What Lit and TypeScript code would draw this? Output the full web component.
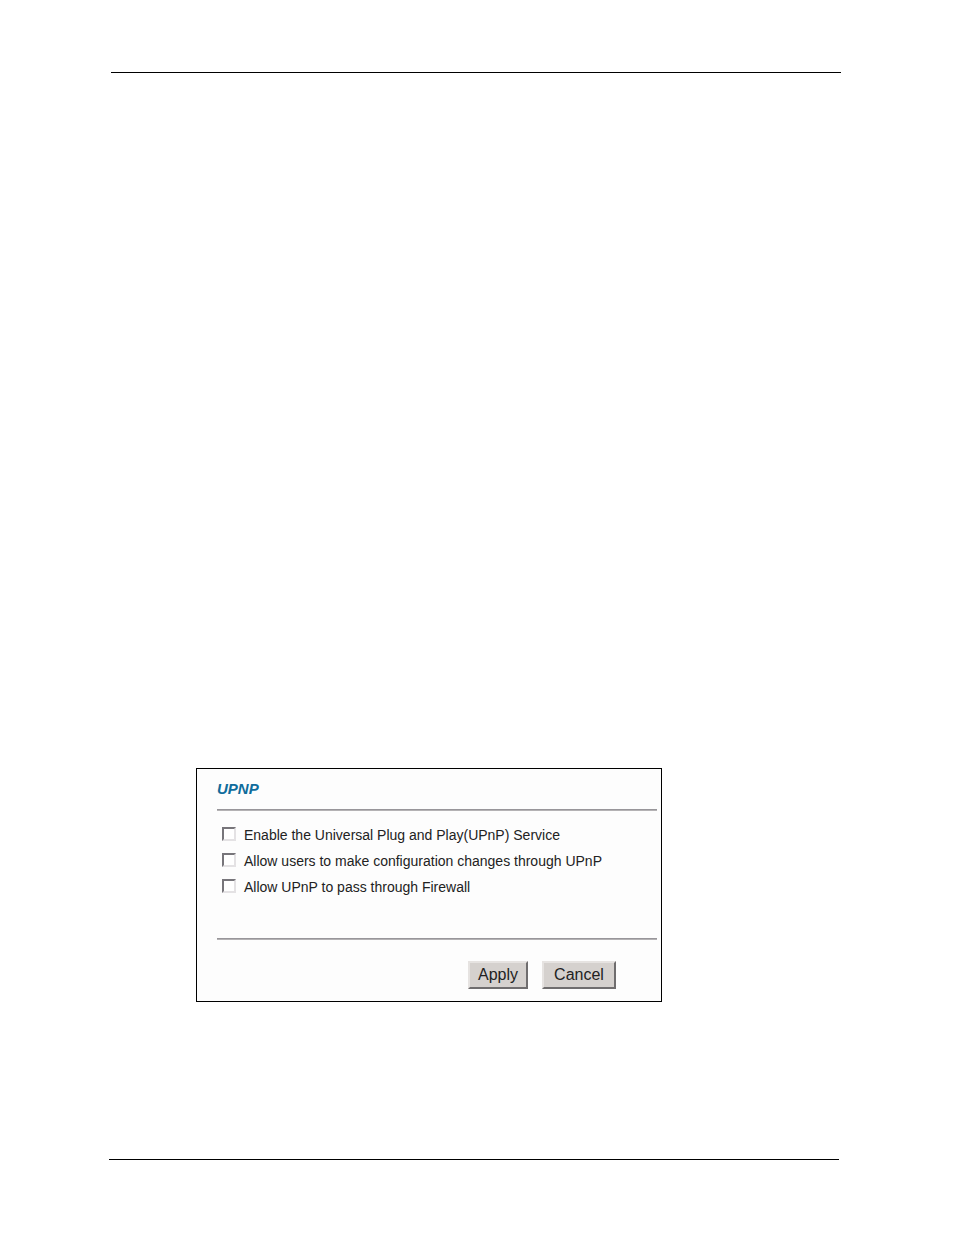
import { LitElement, html, css } from "lit";
import { customElement, state } from "lit/decorators.js";

interface Option {
  id: string;
  label: string;
  checked: boolean;
}

const defaults = (): Option[] => [
  { id: "enable", label: "Enable the Universal Plug and Play(UPnP) Service", checked: false },
  { id: "configure", label: "Allow users to make configuration changes through UPnP", checked: false },
  { id: "firewall", label: "Allow UPnP to pass through Firewall", checked: false },
];

@customElement("upnp-panel")
export class UpnpPanel extends LitElement {
  @state() private options = defaults();

  static styles = css`
    :host {
      display: block;
      box-sizing: border-box;
      border: 1px solid #000;
      background: #fdfdfd;
      color: #222;
      padding: 12px 4px 12px 20px;
      font-family: "Liberation Sans", Arial, sans-serif;
    }
    .title {
      margin: 0;
      font-size: 15px;
      line-height: 16px;
      font-weight: bold;
      font-style: italic;
      color: #0f6c9c;
    }
    .rule {
      margin: 12px 0 11px;
      border: 0;
      border-top: 1px solid #98969a;
      border-bottom: 1px solid #b4b2b4;
    }
    .options {
      display: flex;
      flex-direction: column;
      padding: 0 5px 26px;
    }
    .option {
      display: flex;
      align-items: center;
      gap: 8px;
      min-height: 26px;
    }
    .box {
      appearance: none;
      flex: none;
      box-sizing: border-box;
      width: 14px;
      height: 14px;
      margin: 0 0 2px;
      background: #fff;
      border: 2px solid;
      border-color: #77757a #e4e2e4 #e4e2e4 #77757a;
    }
    .box:checked {
      background: #333;
    }
    .label {
      font-size: 14px;
      line-height: 18px;
    }
    .actions {
      display: flex;
      justify-content: flex-end;
      gap: 14px;
      padding: 10px 41px 0 0;
    }
    .button {
      box-sizing: border-box;
      height: 28px;
      padding: 0 8px;
      font: 16px/24px "Liberation Sans", Arial, sans-serif;
      color: #222;
      background: #d5d1ce;
      border: 2px solid;
      border-color: #e6e3e1 #6f6d6e #6f6d6e #e6e3e1;
      border-radius: 0;
    }
    .cancel {
      min-width: 74px;
    }
  `;

  private toggle(id: string) {
    this.options = this.options.map((o) => (o.id === id ? { ...o, checked: !o.checked } : o));
  }

  private reset() {
    this.options = defaults();
  }

  private submit(e: Event) {
    e.preventDefault();
  }

  render() {
    return html`
      <form @submit=${this.submit}>
        <h1 class="title">UPNP</h1>
        <hr class="rule" />
        <div class="options">
          ${this.options.map(
            (o) => html`
              <div class="option">
                <input
                  class="box"
                  type="checkbox"
                  id=${o.id}
                  .checked=${o.checked}
                  @change=${() => this.toggle(o.id)}
                />
                <label class="label" for=${o.id}>${o.label}</label>
              </div>
            `
          )}
        </div>
        <hr class="rule" />
        <div class="actions">
          <button class="button" type="submit">Apply</button>
          <button class="button cancel" type="button" @click=${this.reset}>Cancel</button>
        </div>
      </form>
    `;
  }
}

@customElement("app-root")
export class AppRoot extends LitElement {
  static styles = css`
    :host {
      display: flex;
      flex-direction: column;
      box-sizing: border-box;
      min-height: 100vh;
      padding: 72px 113px 75px 109px;
      background: #fff;
    }
    .head {
      margin: 0 0 0 2px;
      border: 0;
      border-top: 1px solid #000;
    }
    .foot {
      margin: auto 2px 0 0;
      border: 0;
      border-top: 1px solid #000;
    }
    .figure {
      max-width: 466px;
      margin: 695px 0 48px 87px;
    }
  `;

  render() {
    return html`
      <hr class="head" />
      <main class="figure"><upnp-panel></upnp-panel></main>
      <hr class="foot" />
    `;
  }
}
